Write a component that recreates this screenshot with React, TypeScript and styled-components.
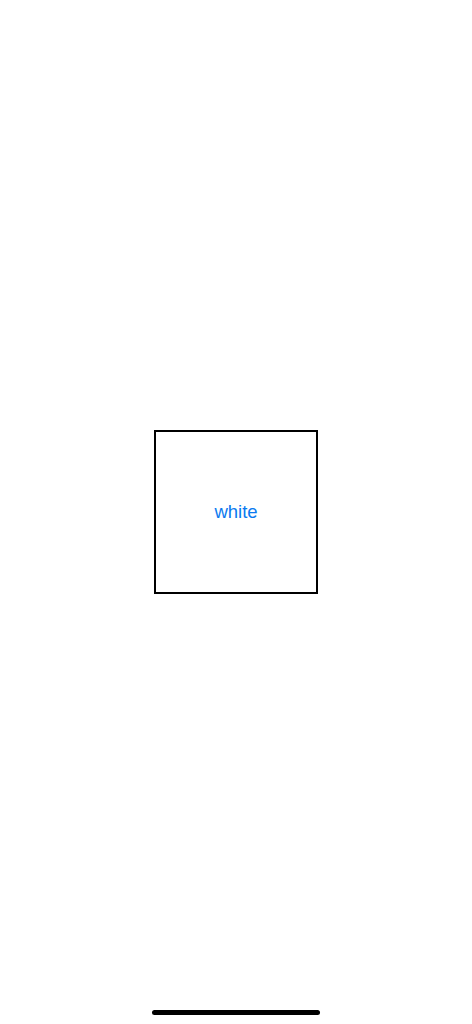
import React from 'react';
import styled, { createGlobalStyle } from 'styled-components';

const GlobalStyle = createGlobalStyle`
  html, body {
    margin: 0;
    padding: 0;
    background: #ffffff;
  }
  body {
    font-family: "Liberation Sans", Arial, sans-serif;
  }
`;

const Screen = styled.div`
  position: relative;
  display: flex;
  align-items: center;
  justify-content: center;
  width: 100%;
  height: 100vh;
  background: #ffffff;
`;

const ColorBox = styled.div<{ $label: string }>`
  display: flex;
  align-items: center;
  justify-content: center;
  box-sizing: border-box;
  width: 164px;
  height: 164px;
  border: 2px solid #000000;
  background: ${(p) => p.$label};
`;

const Label = styled.span`
  font-size: 18.5px;
  color: #0a7af0;
`;

/** iOS home indicator, sits over the page */
const HomeIndicator = styled.div`
  position: absolute;
  left: 50%;
  bottom: 9px;
  width: 168px;
  height: 5px;
  margin-left: -84px;
  border-radius: 3px;
  background: #000000;
`;

const App = () => {
  const color = 'white';

  return (
    <>
      <GlobalStyle />
      <Screen>
        <ColorBox $label={color}>
          <Label>{color}</Label>
        </ColorBox>
        <HomeIndicator />
      </Screen>
    </>
  );
};

export default App;
